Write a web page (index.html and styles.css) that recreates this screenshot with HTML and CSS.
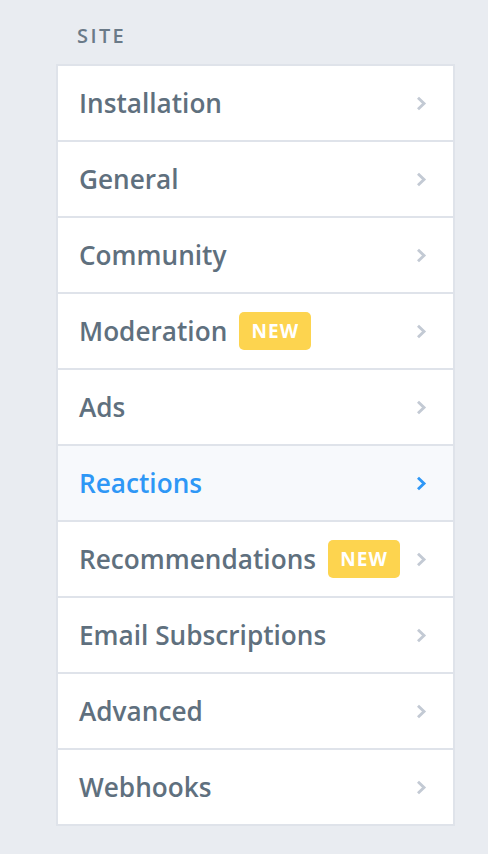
FILE: index.html
```html
<!DOCTYPE html>
<html>
<head>
<meta charset="utf-8">
<link rel="stylesheet" href="styles.css">
</head>
<body>
<div class="page">
  <div class="section-title">SITE</div>
  <ul class="menu">
    <li class="item"><span class="label">Installation</span><span class="chev"><svg width="11" height="15" viewBox="0 0 11 15"><path d="M2 1.8 L8 7.5 L2 13.2" fill="none" stroke="currentColor" stroke-width="2.9"/></svg></span></li>
    <li class="item"><span class="label">General</span><span class="chev"><svg width="11" height="15" viewBox="0 0 11 15"><path d="M2 1.8 L8 7.5 L2 13.2" fill="none" stroke="currentColor" stroke-width="2.9"/></svg></span></li>
    <li class="item"><span class="label">Community</span><span class="chev"><svg width="11" height="15" viewBox="0 0 11 15"><path d="M2 1.8 L8 7.5 L2 13.2" fill="none" stroke="currentColor" stroke-width="2.9"/></svg></span></li>
    <li class="item"><span class="label">Moderation</span><span class="badge">NEW</span><span class="chev"><svg width="11" height="15" viewBox="0 0 11 15"><path d="M2 1.8 L8 7.5 L2 13.2" fill="none" stroke="currentColor" stroke-width="2.9"/></svg></span></li>
    <li class="item"><span class="label">Ads</span><span class="chev"><svg width="11" height="15" viewBox="0 0 11 15"><path d="M2 1.8 L8 7.5 L2 13.2" fill="none" stroke="currentColor" stroke-width="2.9"/></svg></span></li>
    <li class="item active"><span class="label">Reactions</span><span class="chev"><svg width="11" height="15" viewBox="0 0 11 15"><path d="M2 1.8 L8 7.5 L2 13.2" fill="none" stroke="currentColor" stroke-width="2.9"/></svg></span></li>
    <li class="item"><span class="label">Recommendations</span><span class="badge">NEW</span><span class="chev"><svg width="11" height="15" viewBox="0 0 11 15"><path d="M2 1.8 L8 7.5 L2 13.2" fill="none" stroke="currentColor" stroke-width="2.9"/></svg></span></li>
    <li class="item"><span class="label">Email Subscriptions</span><span class="chev"><svg width="11" height="15" viewBox="0 0 11 15"><path d="M2 1.8 L8 7.5 L2 13.2" fill="none" stroke="currentColor" stroke-width="2.9"/></svg></span></li>
    <li class="item"><span class="label">Advanced</span><span class="chev"><svg width="11" height="15" viewBox="0 0 11 15"><path d="M2 1.8 L8 7.5 L2 13.2" fill="none" stroke="currentColor" stroke-width="2.9"/></svg></span></li>
    <li class="item"><span class="label">Webhooks</span><span class="chev"><svg width="11" height="15" viewBox="0 0 11 15"><path d="M2 1.8 L8 7.5 L2 13.2" fill="none" stroke="currentColor" stroke-width="2.9"/></svg></span></li>
  </ul>
</div>
</body>
</html>
```
FILE: styles.css
```css
html, body {
  margin: 0;
  padding: 0;
  background: #e9ecf1;
  height: 100%;
}
body {
  font-family: "Open Sans", "Liberation Sans", sans-serif;
  color: #5f707e;
}
.page {
  padding: 23px 33px 0 56px;
}
.section-title {
  font-size: 20px;
  font-weight: 600;
  letter-spacing: 2.4px;
  color: #6a7a88;
  padding-left: 21px;
  height: 41px;
  line-height: 26px;
}
.menu {
  list-style: none;
  margin: 0;
  padding: 0;
  background: #fff;
  border: 2px solid #dfe3ea;
  width: 395px;
}
.item {
  display: flex;
  align-items: center;
  height: 74px;
  padding: 0 27px 0 21px;
  border-top: 2px solid #dfe3ea;
}
.item:first-child {
  border-top: none;
}
.label {
  font-size: 26.2px;
  font-weight: 600;
  color: #5f707e;
}
.badge {
  margin-left: 12px;
  background: #fdd44f;
  color: #fff;
  font-size: 19px;
  font-weight: 700;
  letter-spacing: 1px;
  border-radius: 5px;
  height: 38px;
  width: 72px;
  display: flex;
  align-items: center;
  justify-content: center;
}
.chev {
  margin-left: auto;
  margin-right: -1px;
  color: #c3cad4;
  display: flex;
  align-items: center;
}
.active {
  background: #f7f9fc;
}
.active .label {
  color: #2e97f6;
}
.active .chev {
  color: #2e97f6;
}
```
